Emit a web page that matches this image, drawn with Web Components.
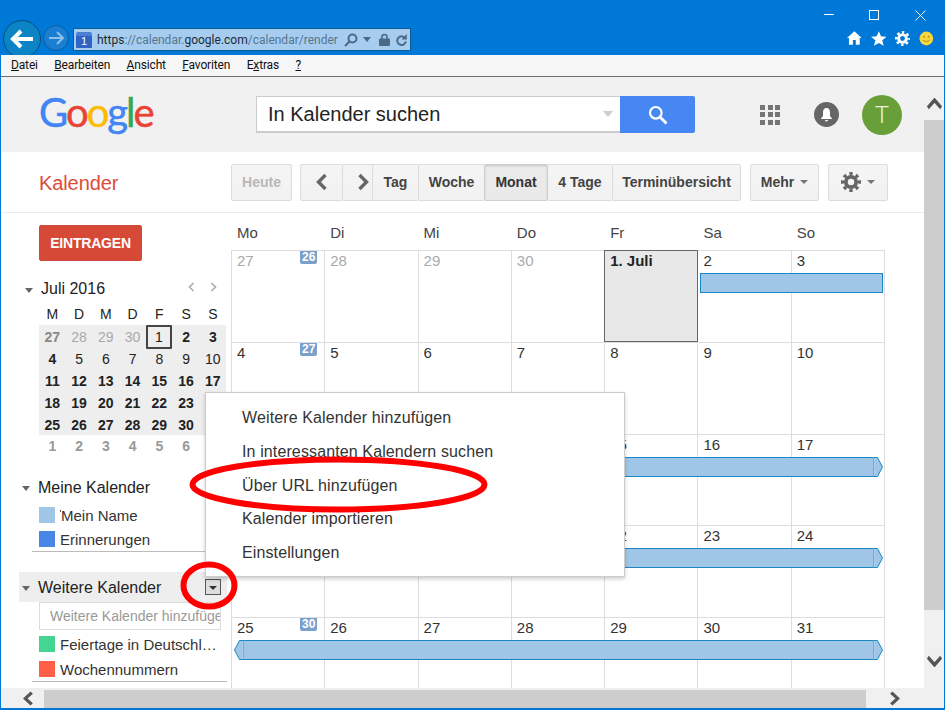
<!doctype html>
<html lang="de">
<head>
<meta charset="utf-8">
<title>Kalender</title>
<style>
  html, body { margin: 0; height: 100%; overflow: hidden; }
  body { font-family: "Liberation Sans", Arial, sans-serif; }
</style>
</head>
<body>
<cal-app></cal-app>
<script>
const define = (name, html) => {
  const template = document.createElement("template");
  template.innerHTML = html;
  customElements.define(
    name,
    class extends HTMLElement {
      connectedCallback() {
        if (this.shadowRoot) return;
        this.attachShadow({ mode: "open" });
        this.shadowRoot.appendChild(template.content.cloneNode(true));
      }
    }
  );
};

const gear = (size, color) => /* HTML */ `
  <svg width="${size}" height="${size}" viewBox="0 0 24 24" style="display:block">
    <circle cx="12" cy="12" r="10" fill="none" stroke="${color}" stroke-width="4" pathLength="64" stroke-dasharray="4 4" stroke-dashoffset="2"/>
    <circle cx="12" cy="12" r="6.2" fill="none" stroke="${color}" stroke-width="4.6"/>
  </svg>`;

const chevron = (dir, color, w = 12, h = 18, sw = 3.4) => {
  const pts = {
    left: "9.5,2 2.5,9 9.5,16",
    right: "2.5,2 9.5,9 2.5,16",
    up: "1,16 9,9 17,16",
    down: "1,2 9,9 17,2",
  }[dir];
  const vb = { left: "0 0 12 18", right: "0 0 12 18", up: "0 7 18 11", down: "0 0 18 11" }[dir];
  return `<svg width="${w}" height="${h}" viewBox="${vb}" style="display:block" preserveAspectRatio="none"><polyline points="${pts}" fill="none" stroke="${color}" stroke-width="${sw}"/></svg>`;
};

define("ie-titlebar", /* HTML */ `
  <style>
    :host { display: flex; height: 55px; background: #0078d7; overflow: hidden; color: #fff; }
    .back, .fwd { flex: none; border-radius: 50%; box-sizing: border-box; display: flex; align-items: center; justify-content: center; }
    .back { width: 38px; height: 38px; margin: 20px 0 0 2px; background: #0a84c4; border: 1px solid #02527f; }
    .fwd { width: 26px; height: 26px; margin: 25px 0 0 2px; background: #1a7fd0; border: 1px solid #055fa4; }
    .addr { flex: none; display: flex; align-items: center; width: 338px; height: 23px; box-sizing: border-box; margin: 28px 0 0 4px; background: #a6cdf0; border: 1px solid #0d5a96; font: 12px Roboto, sans-serif; color: #55758f; white-space: nowrap; }
    .addr b { font-weight: 400; color: #1d2a35; }
    .fav { position: relative; flex: none; width: 16px; height: 16px; margin: 0 5px 0 2px; background: linear-gradient(#4a7fd6 0 4px, #2f63c4 4px); border-radius: 2px 2px 1px 1px; font: 11px/18px "Liberation Sans", sans-serif; color: #fff; text-align: center; }
    .url { width: 241px; overflow: hidden; }
    .tools { display: flex; align-items: center; margin-left: 6px; }
    .right { margin-left: auto; width: 110px; padding-right: 10px; }
    .win { display: flex; align-items: center; height: 30px; }
    .win svg { display: block; }
    .icons { display: flex; align-items: center; height: 16px; margin-top: 0; }
  </style>
  <div class="back">
    <svg width="24" height="20" viewBox="0 0 24 20"><path d="M11 2 3 10l8 8M3.5 10H23" fill="none" stroke="#fff" stroke-width="4"/></svg>
  </div>
  <div class="fwd">
    <svg width="17" height="14" viewBox="0 0 17 14"><path d="M9 1l6 6-6 6M15 7H1" fill="none" stroke="#8fc0ea" stroke-width="2"/></svg>
  </div>
  <div class="addr">
    <span class="fav">1</span>
    <span class="url"><b>https</b>://calendar.<b>google.com</b>/calendar/render</span>
    <span class="tools">
      <svg width="14" height="14" viewBox="0 0 14 14"><circle cx="8.5" cy="5.5" r="4" fill="none" stroke="#4c6a85" stroke-width="2"/><path d="M5.5 8.5 1 13" stroke="#4c6a85" stroke-width="2.2"/></svg>
      <svg width="8" height="5" viewBox="0 0 8 5" style="margin-left:5px"><path d="M0 0h8L4 5z" fill="#4c6a85"/></svg>
      <svg width="11" height="13" viewBox="0 0 11 13" style="margin-left:8px"><path d="M3 6V4a2.5 2.5 0 0 1 5 0v2" fill="none" stroke="#4c6a85" stroke-width="1.6"/><rect y="5.5" width="11" height="7.5" rx="1" fill="#4c6a85"/></svg>
      <svg width="11" height="12" viewBox="0 0 11 12" style="margin-left:6px"><path d="M9.3 4.5A4.3 4.3 0 1 0 9.8 7.5" fill="none" stroke="#4c6a85" stroke-width="2"/><path d="M10.8 0v5.5H5.5z" fill="#4c6a85"/></svg>
    </span>
  </div>
  <div class="right">
    <div class="win">
      <svg width="10" height="2"><rect width="10" height="1" fill="#fff" y="0"/></svg>
      <svg width="10" height="10" style="margin-left:35px"><rect x=".5" y=".5" width="9" height="9" fill="none" stroke="#fff"/></svg>
      <svg width="11" height="11" style="margin-left:36px"><path d="M.5.5l10 10M10.5.5l-10 10" stroke="#fff" fill="none"/></svg>
    </div>
    <div class="icons" style="margin-left:23px">
      <svg width="15" height="14" viewBox="0 0 15 14"><path d="M7.5 0 0 7h2v7h4V9h3v5h4V7h2z" fill="#fff"/></svg>
      <svg width="16" height="15" viewBox="0 0 16 15" style="margin-left:9px"><path d="M8 0l2.2 5.3 5.8.4-4.5 3.700 1.500 5.600L8 12l-5 3 1.500-5.600L0 5.700l5.800-.4z" fill="#fff"/></svg>
      <span style="margin-left:9px">${gear(15, "#fff")}</span>
      <svg width="15" height="15" viewBox="0 0 16 16" style="margin-left:9px"><circle cx="8" cy="8" r="7.5" fill="#f5d63d"/><circle cx="5.6" cy="6" r="1" fill="#a98a10"/><circle cx="10.400" cy="6" r="1" fill="#a98a10"/><path d="M4.500 10q3.500 3 7 0" fill="none" stroke="#a98a10"/></svg>
    </div>
  </div>
`);

define("ie-menubar", /* HTML */ `
  <style>
    :host { display: flex; height: 21px; box-sizing: content-box; background: #f6f6f6; border-bottom: 1px solid #6d6d6d; font: 12px/21px Roboto, sans-serif; letter-spacing: -.15px; color: #111; padding-left: 10px; }
    span { margin-right: 16.400px; }
    u { text-underline-offset: 1px; }
  </style>
  <span><u>D</u>atei</span>
  <span><u>B</u>earbeiten</span>
  <span><u>A</u>nsicht</span>
  <span><u>F</u>avoriten</span>
  <span>E<u>x</u>tras</span>
  <span><u>?</u></span>
`);

define("cal-header", /* HTML */ `
  <style>
    :host { display: flex; align-items: center; height: 75px; background: #f1f1f1; }
    .logo { width: 255px; padding-left: 38px; box-sizing: border-box; flex: none; font: 400 40px/1 Lato, sans-serif; letter-spacing: -2px; -webkit-text-stroke: .5px; margin-top: -6px; }
    .search { display: flex; width: 364px; height: 37px; box-sizing: border-box; background: #fff; border: 1px solid #ccc; border-width: 1px 0 2px 1px; align-items: center; font-size: 20px; color: #222; padding-left: 11px; position: relative; }
    .search i { margin-left: auto; margin-right: 7px; border: 5px solid transparent; border-top: 6px solid #ccc; border-bottom: 0; }
    .go { width: 75px; height: 37px; background: #4787f4; border-radius: 0 2px 2px 0; display: flex; align-items: center; justify-content: center; }
    .apps { display: grid; grid-template-columns: repeat(3, 5px); gap: 2.500px; margin-left: 65px; }
    .apps i { height: 5px; background: #757575; }
    .bell { width: 25px; height: 25px; border-radius: 50%; background: #666; margin-left: 34px; display: flex; align-items: center; justify-content: center; }
    .avatar { width: 40px; height: 40px; border-radius: 50%; background: #689f38; margin-left: 23px; font: 300 24px/40px Roboto, sans-serif; color: #e9f3de; text-align: center; }
  </style>
  <div class="logo"><span style="color:#4285f4">G</span><span style="color:#ea4335">o</span><span style="color:#fbbc05">o</span><span style="color:#4285f4">g</span><span style="color:#34a853">l</span><span style="color:#ea4335">e</span></div>
  <div class="search">In Kalender suchen<i></i></div>
  <div class="go">
    <svg width="20" height="20" viewBox="0 0 20 20"><circle cx="7.800" cy="7.800" r="5.800" fill="none" stroke="#fff" stroke-width="2.200"/><path d="M12 12l6.500 6.500" stroke="#fff" stroke-width="2.800"/></svg>
  </div>
  <div class="apps"><i></i><i></i><i></i><i></i><i></i><i></i><i></i><i></i><i></i></div>
  <div class="bell">
    <svg width="13" height="14" viewBox="0 0 13 14"><path d="M6.500 0C4 0 3 2 3 4.500V8L1 10.500v.5h11v-.5L10 8V4.500C10 2 9 0 6.500 0zM5 12h3a1.500 1.500 0 0 1-3 0z" fill="#fff"/></svg>
  </div>
  <div class="avatar">T</div>
`);

define("tb-btn", /* HTML */ `
  <style>
    :host { display: flex; flex: none; align-items: center; justify-content: center; gap: 6px; box-sizing: border-box; height: 37px; background: linear-gradient(#f5f5f5, #f1f1f1); border: 1px solid #dcdcdc; border-radius: 2px; font: bold 14px "Liberation Sans", sans-serif; color: #444; margin-left: -1px; position: relative; }
    :host(.off) { color: #b8b8b8; }
    :host(.on) { background: #eaeaea; border-color: #cfcfcf; box-shadow: inset 0 1px 2px rgba(0, 0, 0, .15); color: #333; z-index: 1; }
    :host(.top) { z-index: 2; }
  </style>
  <slot></slot>
`);

const caret = '<svg width="8" height="4" viewBox="0 0 8 4" style="display:block"><path d="M0 0h8L4 4z" fill="#777"/></svg>';

define("cal-toolbar", /* HTML */ `
  <style>
    :host { display: flex; align-items: center; height: 60px; box-sizing: content-box; background: #fff; border-bottom: 1px solid #ebebeb; }
    .name { width: 230px; padding-left: 38px; box-sizing: border-box; flex: none; font-size: 20px; color: #dd4b39; margin-top: 2px; letter-spacing: -.1px; }
    .group { display: flex; }
  </style>
  <div class="name">Kalender</div>
  <tb-btn class="off" style="width:61px;margin-left:0">Heute</tb-btn>
  <div class="group" style="margin-left:8px">
    <tb-btn style="width:43px;margin-left:0">${chevron("left", "#666")}</tb-btn>
    <tb-btn style="width:39px;padding-left:3px;margin-right:-8px">${chevron("right", "#666")}</tb-btn>
    <tb-btn class="top" style="width:47px">Tag</tb-btn>
    <tb-btn class="top" style="width:67px">Woche</tb-btn>
    <tb-btn class="on" style="width:64px;z-index:3">Monat</tb-btn>
    <tb-btn class="top" style="width:66px">4 Tage</tb-btn>
    <tb-btn class="top" style="width:129px">Terminübersicht</tb-btn>
  </div>
  <tb-btn style="width:69px;margin-left:9px">Mehr ${caret}</tb-btn>
  <tb-btn style="width:60px;margin-left:9px">${gear(20, "#666")} ${caret}</tb-btn>
`);

const rows = [
  ["27b:m", "28:m", "29:m", "30:m", "1:t", "2b", "3b"],
  ["4b", "5", "6", "7", "8", "9", "10"],
  ["11b", "12b", "13b", "14b", "15b", "16b", "17b"],
  ["18b", "19b", "20b", "21b", "22b", "23b", "24b"],
  ["25b", "26b", "27b", "28b", "29b", "30b", "31b"],
];
const cell = (spec) => {
  const [v, mod] = spec.split(":");
  const bold = v.endsWith("b");
  const cls = [bold ? "b" : "", mod === "m" ? "m" : "", mod === "t" ? "t" : ""].join(" ");
  return `<span class="${cls}">${bold ? v.slice(0, -1) : v}</span>`;
};

define("mini-month", /* HTML */ `
  <style>
    :host { display: block; margin-top: 18px; font-size: 14px; color: #222; }
    .head { display: flex; align-items: center; height: 20px; padding-left: 24px; font-size: 16px; }
    .head i { border: 4.500px solid transparent; border-top: 5px solid #666; border-bottom: 0; margin-right: 8px; margin-top: 2px; }
    .nav { display: flex; margin-left: auto; gap: 15px; margin-right: 14px; margin-top: -5px; }
    .dow, .days, .next { display: grid; grid-template-columns: repeat(7, 26.750px); width: 187.250px; margin-left: 38px; text-align: center; }
    .dow { height: 26px; line-height: 30px; }
    .days { background: #eee; grid-auto-rows: 22px; line-height: 24px; }
    .b { font-weight: bold; }
    .m { color: #aaa; }
    .m.b { color: #888; }
    .t { box-sizing: border-box; width: 26px; height: 24px; border: 2px solid #444; border-radius: 1px; line-height: 21px; margin-bottom: -3px; }
    .next { line-height: 22px; font-weight: bold; color: #999; }
  </style>
  <div class="head"><i></i>Juli 2016<span class="nav">${chevron("left", "#aaa", 7, 10, 2.600)}${chevron("right", "#aaa", 7, 10, 2.600)}</span></div>
  <div class="dow"><span>M</span><span>D</span><span>M</span><span>D</span><span>F</span><span>S</span><span>S</span></div>
  <div class="days">${rows.flat().map(cell).join("")}</div>
  <div class="next"><span>1</span><span>2</span><span>3</span><span>4</span><span>5</span><span>6</span><span>7</span></div>
`);

define("list-head", /* HTML */ `
  <style>
    :host { display: flex; align-items: center; height: 30px; box-sizing: border-box; padding: 2px 0 0 3px; font-size: 16px; color: #222; }
    :host(.on) { background: #eee; }
    i { border: 4.500px solid transparent; border-top: 5px solid #666; border-bottom: 0; margin-right: 8px; margin-top: 1px; }
  </style>
  <i></i><slot></slot>
`);

define("list-item", /* HTML */ `
  <style>
    :host { display: flex; align-items: center; height: 25px; padding-left: 20px; font-size: 15px; color: #333; white-space: nowrap; }
    i { flex: none; width: 16px; height: 16px; background: var(--swatch); margin-right: 5px; }
    span { overflow: hidden; text-overflow: ellipsis; width: 160px; padding-top: 1px; }
  </style>
  <i></i><span><slot></slot></span>
`);

define("cal-sidebar", /* HTML */ `
  <style>
    :host { display: block; flex: none; width: 230px; box-sizing: border-box; padding-top: 12px; overflow: hidden; }
    .create { width: 103px; height: 36px; margin-left: 38px; box-sizing: border-box; background: #d74937; border: 1px solid #cf4a3a; border-radius: 2px; color: #fff; font: bold 14px/34px "Liberation Sans", sans-serif; text-align: center; letter-spacing: -.2px; }
    .lists { margin: 15px 4px 0 18px; }
    .rule { border-bottom: 1px solid #bbb; margin-left: 13px; height: 0; }
    .field { margin: 0 6px 0 20px; height: 28px; box-sizing: border-box; border: 1px solid #ddd; font-size: 14px; line-height: 27px; color: #999; padding-left: 10px; white-space: nowrap; overflow: hidden; }
    .btn { margin: -2px 6px 0 auto; width: 16px; height: 16px; box-sizing: border-box; border: 1px solid #555; background: #ddd; display: flex; align-items: center; justify-content: center; }
    .btn i { border: 4px solid transparent; border-top: 4px solid #333; border-bottom: 0; margin-top: 1px; }
    .tick { display: inline-block; width: 1px; height: 2px; background: #555; vertical-align: 9px; }
  </style>
  <div class="create">EINTRAGEN</div>
  <mini-month></mini-month>
  <div class="lists">
    <list-head>Meine Kalender</list-head>
    <list-item style="--swatch:#9fc6e7"><span class="tick"></span>Mein Name</list-item>
    <list-item style="--swatch:#4986e7;height:24px">Erinnerungen</list-item>
    <div class="rule"></div>
    <list-head class="on" style="margin-top:20px">Weitere Kalender<span class="btn"><i></i></span></list-head>
    <div class="field">Weitere Kalender hinzufügen</div>
    <list-item style="--swatch:#42d692;height:28px">Feiertage in Deutschland</list-item>
    <list-item style="--swatch:#ff5f47;height:22px">Wochennummern</list-item>
    <div class="rule" style="margin-top:1px"></div>
  </div>
`);

define("cal-day", /* HTML */ `
  <style>
    :host { display: block; position: relative; grid-row: 1; box-sizing: border-box; height: 100%; padding: 1px 0 0 5px; border-right: 1px solid #ddd; border-top: 1px solid #ddd; font-size: 15px; line-height: 18px; color: #333; }
    :host(.out) { color: #aaa; }
    :host(.today) { background: #e8e8e8; border: 1px solid #666; margin: 0 0 -1px -1px; padding-left: 5px; font-weight: bold; color: #222; z-index: 1; }
  </style>
  <slot></slot>
`);

define("wk-tag", /* HTML */ `
  <style>
    :host { position: absolute; top: 0; right: 7px; width: 17px; height: 13px; background: #7aa0cb; border-radius: 0 0 2px 2px; color: #fff; font: bold 12px/13px "Liberation Sans", sans-serif; text-align: center; }
  </style>
  <slot></slot>
`);

const capFill = "#9fc6e7", capLine = "#1a87c4", capInner = "#b9d6ee";
define("cal-bar", /* HTML */ `
  <style>
    :host { display: flex; grid-row: 1; align-self: start; height: 20px; margin: 23px 2px 0 2px; z-index: 1; }
    .mid { flex: 1; box-sizing: border-box; background: ${capFill}; border: solid ${capLine}; border-width: 1px 0; }
    :host(.flat) .mid { border-width: 1px; }
    svg { display: block; flex: none; }
    :host(.flat) svg { display: none; }
  </style>
  <svg width="10" height="20" viewBox="0 0 10 20"><path d="M9.500.5H5.500L.5 10l5 9.500h4z" fill="${capFill}" stroke="${capLine}"/><path d="M9 1v18" stroke="${capInner}"/></svg>
  <div class="mid"></div>
  <svg width="10" height="20" viewBox="0 0 10 20"><path d="M.5.5h4l5 9.500-5 9.500h-4z" fill="${capFill}" stroke="${capLine}"/><path d="M1 1v18" stroke="${capInner}"/></svg>
`);

define("cal-week", /* HTML */ `
  <style>
    :host { display: grid; grid-template-columns: repeat(7, 1fr); height: 91.750px; }
  </style>
  <slot></slot>
`);

const week = (days, out, wk, bar, today) => {
  const cells = days
    .map((d, i) => {
      const cls = out.includes(i) ? "out" : i === today ? "today" : "";
      const tag = i === 0 && wk ? `<wk-tag>${wk}</wk-tag>` : "";
      return `<cal-day class="${cls}" style="grid-column:${i + 1}">${d}${tag}</cal-day>`;
    })
    .join("");
  return `<cal-week>${cells}${bar}</cal-week>`;
};

define("cal-grid", /* HTML */ `
  <style>
    :host { display: block; flex: none; width: 654px; overflow: hidden; }
    .dow { display: grid; grid-template-columns: repeat(7, 1fr); height: 37px; margin-left: 1px; font-size: 15px; line-height: 39px; color: #444; }
    .dow span { padding-left: 5px; }
    .weeks { border-left: 1px solid #ddd; }
  </style>
  <div class="dow"><span>Mo</span><span>Di</span><span>Mi</span><span>Do</span><span>Fr</span><span>Sa</span><span>So</span></div>
  <div class="weeks">
    ${week([27, 28, 29, 30, "1. Juli", 2, 3], [0, 1, 2, 3], 26, '<cal-bar class="flat" style="grid-column:6/8"></cal-bar>', 4)}
    ${week([4, 5, 6, 7, 8, 9, 10], [], 27, "")}
    ${week([11, 12, 13, 14, 15, 16, 17], [], 0, '<cal-bar style="grid-column:1/8"></cal-bar>')}
    ${week([18, 19, 20, 21, 22, 23, 24], [], 0, '<cal-bar style="grid-column:1/8"></cal-bar>')}
    ${week([25, 26, 27, 28, 29, 30, 31], [], 30, '<cal-bar style="grid-column:1/8"></cal-bar>')}
  </div>
`);

define("cal-menu", /* HTML */ `
  <style>
    :host { position: absolute; left: 204px; top: 392px; width: 420px; height: 185px; box-sizing: border-box; padding: 8px 0 0 36px; background: #fff; border: 1px solid #ccc; box-shadow: 0 2px 4px rgba(0, 0, 0, .2); font-size: 16px; letter-spacing: .12px; line-height: 33.750px; color: #333; z-index: 5; }
    div { white-space: nowrap; }
  </style>
  <div>Weitere Kalender hinzufügen</div>
  <div>In interessanten Kalendern suchen</div>
  <div>Über URL hinzufügen</div>
  <div>Kalender importieren</div>
  <div>Einstellungen</div>
`);

define("v-scroll", /* HTML */ `
  <style>
    :host { display: flex; flex-direction: column; flex: none; width: 20px; background: #f0f0f0; }
    .up { height: 43px; display: flex; justify-content: center; padding-top: 21px; box-sizing: border-box; }
    .thumb { height: 490px; background: #cdcdcd; }
    .down { flex: 1; display: flex; justify-content: center; padding-top: 45px; box-sizing: border-box; }
  </style>
  <div class="up">${chevron("up", "#555", 15, 12, 3.600)}</div>
  <div class="thumb"></div>
  <div class="down">${chevron("down", "#555", 15, 12, 3.600)}</div>
`);

define("h-scroll", /* HTML */ `
  <style>
    :host { display: flex; height: 20px; background: #f0f0f0; align-items: stretch; }
    .arrow { width: 43px; display: flex; justify-content: center; align-items: center; flex: none; box-sizing: border-box; padding-left: 12px; }
    .thumb { width: 822px; background: #cdcdcd; margin-top: 2px; }
    .r { width: 57px; padding-left: 0; }
  </style>
  <div class="arrow">${chevron("left", "#555", 11, 15, 3.600)}</div>
  <div class="thumb"></div>
  <div class="arrow r">${chevron("right", "#555", 11, 15, 3.600)}</div>
`);

define("cal-app", /* HTML */ `
  <style>
    :host { display: block; position: relative; width: 945px; height: 710px; box-sizing: border-box; border: 1px solid #0078d7; border-width: 0 1px 2px; background: #fff; overflow: hidden; }
    .page { display: flex; height: 611px; }
    .content { flex: none; width: 923px; overflow: hidden; }
    .main { display: flex; height: 476px; overflow: hidden; }
    .marks { position: absolute; left: -1px; top: 0; z-index: 6; pointer-events: none; }
  </style>
  <ie-titlebar></ie-titlebar>
  <ie-menubar></ie-menubar>
  <div class="page">
    <div class="content">
      <cal-header></cal-header>
      <cal-toolbar></cal-toolbar>
      <div class="main">
        <cal-sidebar></cal-sidebar>
        <cal-grid></cal-grid>
      </div>
    </div>
    <v-scroll></v-scroll>
  </div>
  <h-scroll></h-scroll>
  <cal-menu></cal-menu>
  <svg class="marks" width="945" height="710">
    <ellipse cx="338.500" cy="484.500" rx="146" ry="25" fill="none" stroke="#f00" stroke-width="6"/>
    <ellipse cx="209" cy="585.500" rx="25.500" ry="21" fill="none" stroke="#f00" stroke-width="6"/>
  </svg>
`);
</script>
</body>
</html>
